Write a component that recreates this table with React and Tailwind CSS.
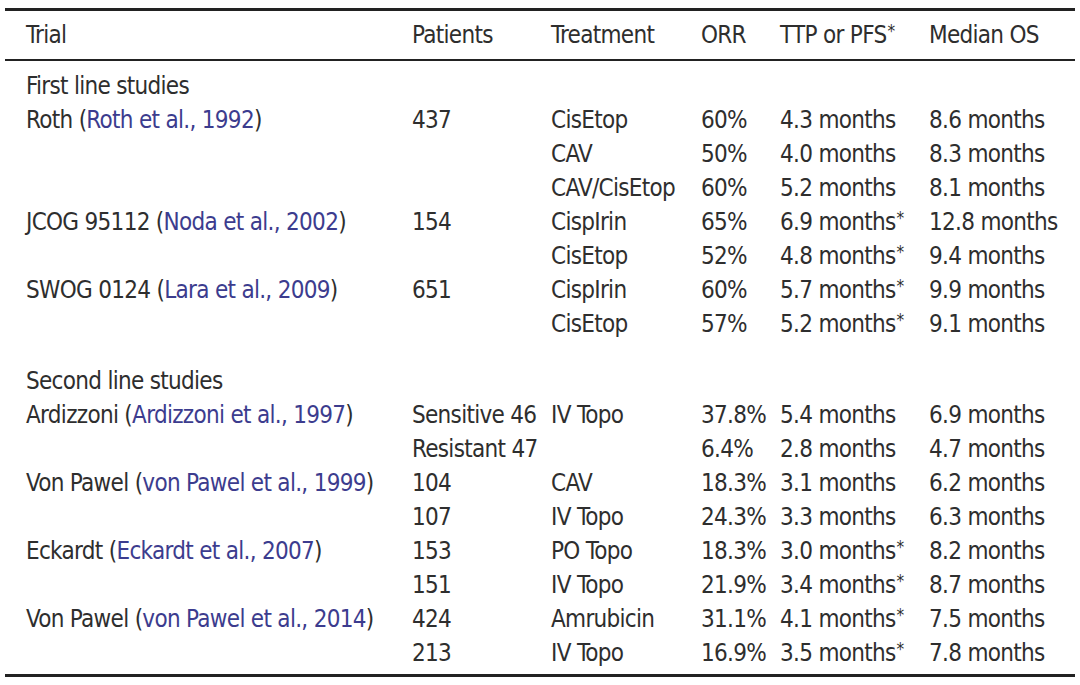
import React from "react";

const L = ({ children }) => <span className="text-[#3c3c8e]">{children}</span>;
const S = () => <span className="inline-block align-top text-[17px] leading-[17px] relative top-[5px] ml-[1px]">*</span>;

const rows = [
  { t: "sec", a: "First line studies" },
  { a: <>Roth (<L>Roth et al., 1992</L>)</>, b: "437", c: "CisEtop", d: "60%", e: "4.3 months", f: "8.6 months" },
  { a: "", b: "", c: "CAV", d: "50%", e: "4.0 months", f: "8.3 months" },
  { a: "", b: "", c: "CAV/CisEtop", d: "60%", e: "5.2 months", f: "8.1 months" },
  { a: <>JCOG 95112 (<L>Noda et al., 2002</L>)</>, b: "154", c: "CispIrin", d: "65%", e: <>6.9 months<S /></>, f: "12.8 months" },
  { a: "", b: "", c: "CisEtop", d: "52%", e: <>4.8 months<S /></>, f: "9.4 months" },
  { a: <>SWOG 0124 (<L>Lara et al., 2009</L>)</>, b: "651", c: "CispIrin", d: "60%", e: <>5.7 months<S /></>, f: "9.9 months" },
  { a: "", b: "", c: "CisEtop", d: "57%", e: <>5.2 months<S /></>, f: "9.1 months" },
  { t: "gap" },
  { t: "sec", a: "Second line studies" },
  { a: <>Ardizzoni (<L>Ardizzoni et al., 1997</L>)</>, b: "Sensitive 46", c: "IV Topo", d: "37.8%", e: "5.4 months", f: "6.9 months" },
  { a: "", b: "Resistant 47", c: "", d: "6.4%", e: "2.8 months", f: "4.7 months" },
  { a: <>Von Pawel (<L>von Pawel et al., 1999</L>)</>, b: "104", c: "CAV", d: "18.3%", e: "3.1 months", f: "6.2 months" },
  { a: "", b: "107", c: "IV Topo", d: "24.3%", e: "3.3 months", f: "6.3 months" },
  { a: <>Eckardt (<L>Eckardt et al., 2007</L>)</>, b: "153", c: "PO Topo", d: "18.3%", e: <>3.0 months<S /></>, f: "8.2 months" },
  { a: "", b: "151", c: "IV Topo", d: "21.9%", e: <>3.4 months<S /></>, f: "8.7 months" },
  { a: <>Von Pawel (<L>von Pawel et al., 2014</L>)</>, b: "424", c: "Amrubicin", d: "31.1%", e: <>4.1 months<S /></>, f: "7.5 months" },
  { a: "", b: "213", c: "IV Topo", d: "16.9%", e: <>3.5 months<S /></>, f: "7.8 months" },
];

const grid = "grid grid-cols-[386px_139px_150px_79px_149px_1fr] pl-[21px]";

export default function App() {
  return (
    <div
      className="w-[1080px] h-[685px] bg-white text-[#2e2e2e] pt-[8px]"
      style={{ fontFamily: '"DejaVu Sans Condensed", "DejaVu Sans", sans-serif' }}
    >
      <div className="mx-[5px] w-[1070px] text-[24px] leading-[34px] tracking-[-0.7px]">
        <div className="border-t-[3px] border-[#222]" />
        <div className={`${grid} h-[48px] items-center`}>
          <div>Trial</div>
          <div>Patients</div>
          <div>Treatment</div>
          <div>ORR</div>
          <div>TTP or PFS<S /></div>
          <div>Median OS</div>
        </div>
        <div className="border-t-[2.5px] border-[#222]" />
        <div className="pt-[8px] pb-[4px]">
          {rows.map((r, i) => {
            if (r.t === "gap") return <div key={i} className="h-[23px]" />;
            if (r.t === "sec")
              return (
                <div key={i} className={`${grid} h-[34px] items-center`}>
                  <div className="col-span-6">{r.a}</div>
                </div>
              );
            return (
              <div key={i} className={`${grid} h-[34px] items-center whitespace-nowrap`}>
                <div>{r.a}</div>
                <div>{r.b}</div>
                <div>{r.c}</div>
                <div>{r.d}</div>
                <div>{r.e}</div>
                <div>{r.f}</div>
              </div>
            );
          })}
        </div>
        <div className="border-t-[3px] border-[#222]" />
      </div>
    </div>
  );
}
